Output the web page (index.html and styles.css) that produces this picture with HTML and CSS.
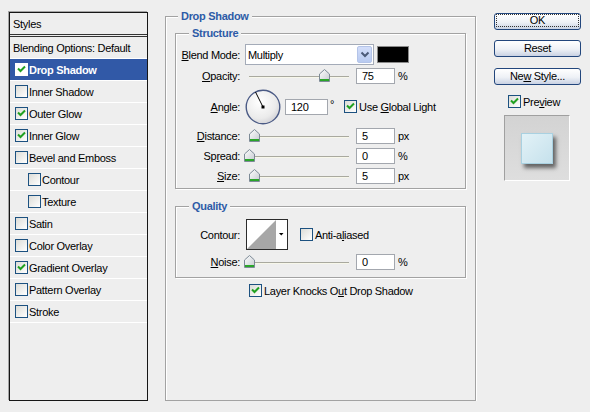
FILE: index.html
```html
<!DOCTYPE html>
<html>
<head>
<title>Layer Style</title>
<link rel="stylesheet" href="styles.css">
</head>
<body>
<svg class="defs" width="0" height="0">
  <defs>
    <linearGradient id="thumb-fill" x1="0" y1="0" x2="1" y2="1">
      <stop offset="0" stop-color="#ffffff"/>
      <stop offset="1" stop-color="#c4c9cf"/>
    </linearGradient>
    <radialGradient id="dial-fill" cx="0.4" cy="0.35" r="0.7">
      <stop offset="0" stop-color="#ffffff"/>
      <stop offset="0.7" stop-color="#ebebeb"/>
      <stop offset="1" stop-color="#cfcfd4"/>
    </radialGradient>
    <symbol id="thumb" viewBox="0 0 11 13">
      <path d="M5.5 0.5 L10.5 5 V12.5 H0.5 V5 Z" fill="url(#thumb-fill)" stroke="#7d8a96"/>
      <rect x="1" y="10" width="9" height="2" fill="#2aa52a"/>
    </symbol>
    <symbol id="tick" viewBox="0 0 11 11">
      <polyline points="2,4.5 4.5,7 9,2.5" fill="none" stroke="#21a121" stroke-width="2"/>
    </symbol>
  </defs>
</svg>

<div class="dialog">

  <div class="styles-list">
    <div class="styles-head">Styles</div>
    <div class="style-row plain">Blending Options: Default</div>
    <div class="style-row selected"><span class="check"><svg width="11" height="11"><use href="#tick"/></svg></span>Drop Shadow</div>
    <div class="style-row"><span class="check"></span>Inner Shadow</div>
    <div class="style-row"><span class="check"><svg width="11" height="11"><use href="#tick"/></svg></span>Outer Glow</div>
    <div class="style-row"><span class="check"><svg width="11" height="11"><use href="#tick"/></svg></span>Inner Glow</div>
    <div class="style-row"><span class="check"></span>Bevel and Emboss</div>
    <div class="style-row indent"><span class="check"></span>Contour</div>
    <div class="style-row indent"><span class="check"></span>Texture</div>
    <div class="style-row"><span class="check"></span>Satin</div>
    <div class="style-row"><span class="check"></span>Color Overlay</div>
    <div class="style-row"><span class="check"><svg width="11" height="11"><use href="#tick"/></svg></span>Gradient Overlay</div>
    <div class="style-row"><span class="check"></span>Pattern Overlay</div>
    <div class="style-row"><span class="check"></span>Stroke</div>
  </div>

  <div class="group group-main">
    <div class="group-title">Drop Shadow</div>

    <div class="group group-inner group-structure">
      <div class="group-title title-inner">Structure</div>

      <div class="row row-blend">
        <span class="label"><u>B</u>lend Mode:</span>
        <div class="select">
          <span class="select-value">Multiply</span>
          <span class="select-btn">
            <svg width="10" height="7" viewBox="0 0 10 7"><polyline points="1.5,1.5 5,5 8.5,1.5" fill="none" stroke="#4b5a78" stroke-width="2"/></svg>
          </span>
        </div>
        <span class="swatch"></span>
      </div>

      <div class="row row-slider gap-3">
        <span class="label"><u>O</u>pacity:</span>
        <div class="slider"><svg class="thumb" style="left:75%" width="11" height="13"><use href="#thumb"/></svg></div>
        <span class="field">75</span>
        <span class="unit">%</span>
      </div>

      <div class="row row-angle gap-4">
        <span class="label"><u>A</u>ngle:</span>
        <svg class="dial" width="36" height="36" viewBox="0 0 36 36">
          <circle cx="18" cy="18" r="16.8" fill="url(#dial-fill)" stroke="#4a5a85" stroke-width="1.4"/>
          <line x1="18" y1="18" x2="10.5" y2="3" stroke="#000" stroke-width="1"/>
          <rect x="16.5" y="16.5" width="3" height="3" fill="#000"/>
        </svg>
        <span class="field field-angle">120</span>
        <span class="degree">°</span>
        <span class="check check-global"><svg width="11" height="11"><use href="#tick"/></svg></span>
        <span class="check-text">Use <u>G</u>lobal Light</span>
      </div>

      <div class="row row-slider gap-3">
        <span class="label"><u>D</u>istance:</span>
        <div class="slider"><svg class="thumb" style="left:5%" width="11" height="13"><use href="#thumb"/></svg></div>
        <span class="field">5</span>
        <span class="unit">px</span>
      </div>

      <div class="row row-slider gap-4">
        <span class="label">Sp<u>r</u>ead:</span>
        <div class="slider"><svg class="thumb" style="left:0%" width="11" height="13"><use href="#thumb"/></svg></div>
        <span class="field">0</span>
        <span class="unit">%</span>
      </div>

      <div class="row row-slider gap-4">
        <span class="label"><u>S</u>ize:</span>
        <div class="slider"><svg class="thumb" style="left:5%" width="11" height="13"><use href="#thumb"/></svg></div>
        <span class="field">5</span>
        <span class="unit">px</span>
      </div>
    </div>

    <div class="group group-inner group-quality">
      <div class="group-title title-inner">Quality</div>

      <div class="row row-contour">
        <span class="label">Contour:</span>
        <svg class="contour" width="42" height="31" viewBox="0 0 42 31">
          <rect x="0.5" y="0.5" width="41" height="30" fill="#fff" stroke="#2b2b2b"/>
          <polygon points="1,30 30,1 30,30" fill="#a7a7a7"/>
          <polygon points="33,14 37.5,14 35.25,16.5" fill="#000"/>
        </svg>
        <span class="check check-aa"></span>
        <span class="check-text">Anti-a<u>l</u>iased</span>
      </div>

      <div class="row row-slider gap-4">
        <span class="label"><u>N</u>oise:</span>
        <div class="slider"><svg class="thumb" style="left:0%" width="11" height="13"><use href="#thumb"/></svg></div>
        <span class="field">0</span>
        <span class="unit">%</span>
      </div>
    </div>

    <div class="row row-knock">
      <span class="check"><svg width="11" height="11"><use href="#tick"/></svg></span>
      <span class="check-text">Layer Knocks O<u>u</u>t Drop Shadow</span>
    </div>
  </div>

  <div class="buttons">
    <div class="btn btn-default"><span>OK</span></div>
    <div class="btn btn-reset">Reset</div>
    <div class="btn btn-new">Ne<u>w</u> Style...</div>
    <div class="row row-preview">
      <span class="check"><svg width="11" height="11"><use href="#tick"/></svg></span>
      <span class="check-text">Pre<u>v</u>iew</span>
    </div>
    <div class="preview">
      <div class="preview-square"></div>
    </div>
  </div>

</div>
</body>
</html>
```

FILE: styles.css
```css
body {
  margin: 0;
  background-color: #eeeeee;
  font-family: "Liberation Sans", Arial, sans-serif;
  font-size: 11px;
  letter-spacing: -0.3px;
  color: #000;
}
.defs {
  position: absolute;
  width: 0;
  height: 0;
}
.dialog {
  display: flex;
  align-items: flex-start;
  padding: 12px 0 0 9px;
}

/* styles list */
.styles-list {
  width: 139px;
  height: 389px;
  box-sizing: border-box;
  border: 1px solid #161616;
  box-shadow: -1px -1px 0 #a5a5a5;
  background-color: #eeeeee;
}
.styles-head {
  height: 21px;
  line-height: 22px;
  padding-left: 3px;
  border-bottom: 3px double #333;
}
.style-row {
  display: flex;
  align-items: center;
  height: 21px;
  padding-left: 5px;
  border-bottom: 1px solid #fff;
  white-space: nowrap;
}
.style-row.plain {
  padding-left: 3px;
}
.style-row.indent {
  padding-left: 18px;
}
.style-row.selected {
  background-color: #3159a7;
  color: #fff;
  font-weight: bold;
}
.check {
  display: inline-flex;
  align-items: center;
  justify-content: center;
  flex: none;
  width: 13px;
  height: 13px;
  box-sizing: border-box;
  border: 1px solid #1c5180;
  background: linear-gradient(135deg, #dcdcd7, #ffffff);
  margin-right: 1px;
}
.selected .check {
  border-color: #fff;
  background: #fff;
}
.check-text {
  margin-left: 1px;
  white-space: nowrap;
}

/* group boxes */
.group {
  border: 1px solid #a2a2a2;
  box-shadow: inset 1px 1px 0 #fff, 1px 1px 0 #fff;
  box-sizing: border-box;
}
.group-title {
  display: table;
  margin: -7px 0 0 12px;
  padding: 0 3px;
  line-height: 13px;
  background-color: #eeeeee;
  color: #2d5ba7;
  font-weight: bold;
}
.title-inner {
  margin-left: 13px;
}
.group-main {
  width: 311px;
  height: 385px;
  margin: 4px 0 0 17px;
}
.group-inner {
  width: 291px;
  margin-left: 9px;
}
.group-structure {
  margin-top: 10px;
  padding-bottom: 4px;
}
.group-quality {
  margin-top: 17px;
  padding-bottom: 7px;
}

/* rows */
.row {
  display: flex;
  align-items: center;
}
.gap-3 {
  margin-top: 3px;
}
.gap-4 {
  margin-top: 4px;
}
.label {
  flex: none;
  width: 64px;
  text-align: right;
  white-space: nowrap;
}
.row-blend {
  height: 21px;
  margin-top: 4px;
}
.select {
  display: flex;
  width: 129px;
  height: 21px;
  box-sizing: border-box;
  margin-left: 5px;
  border: 1px solid #a4abb8;
  background-color: #fff;
}
.select-value {
  flex: 1;
  padding-left: 2px;
  line-height: 20px;
}
.select-btn {
  display: flex;
  align-items: center;
  justify-content: center;
  width: 15px;
  height: 17px;
  margin: 1px;
  border: 1px solid #b4c4e8;
  border-radius: 2px;
  box-sizing: border-box;
  background: linear-gradient(#d3defa, #b8caf0);
}
.swatch {
  width: 32px;
  height: 17px;
  margin-left: 3px;
  box-sizing: border-box;
  border: 1px solid #8a8a8a;
  background-color: #000;
}
.row-slider {
  height: 16px;
}
.slider {
  position: relative;
  flex: none;
  width: 100px;
  height: 16px;
  margin-left: 9px;
}
.slider::before {
  content: "";
  position: absolute;
  left: 0;
  right: 0;
  top: 8px;
  height: 1px;
  background-color: #a9a99f;
  box-shadow: 0 1px 0 #f7f7ea;
}
.thumb {
  position: absolute;
  top: 1px;
  margin-left: -5px;
}
.field {
  flex: none;
  width: 39px;
  height: 16px;
  box-sizing: border-box;
  margin-left: 7px;
  padding-left: 5px;
  border: 1px solid #a3a7ae;
  background-color: #fff;
  line-height: 15px;
}
.unit {
  margin-left: 3px;
}
.row-angle {
  height: 37px;
}
.dial {
  flex: none;
  margin-left: 5px;
}
.field-angle {
  width: 43px;
  margin-left: 4px;
}
.degree {
  margin-left: 2px;
  align-self: flex-start;
  margin-top: 10px;
}
.check-global {
  margin-left: 10px;
}
.row-contour {
  height: 31px;
  margin-top: 6px;
}
.contour {
  flex: none;
  margin-left: 6px;
}
.check-aa {
  margin-left: 12px;
}
.row-knock {
  height: 13px;
  margin: 6px 0 0 83px;
}

/* buttons */
.buttons {
  display: flex;
  flex-direction: column;
  width: 87px;
  margin: 1px 0 0 18px;
}
.btn {
  height: 17px;
  box-sizing: border-box;
  border: 1px solid #22467c;
  border-radius: 3px;
  background: linear-gradient(#ffffff, #eef1f6 55%, #c9d2e3);
  text-align: center;
  line-height: 15px;
}
.btn-default span {
  display: block;
  margin: 1px 2px;
  line-height: 11px;
  outline: 1px dotted #333;
}
.btn-reset {
  margin-top: 10px;
}
.btn-new {
  margin-top: 11px;
}
.row-preview {
  height: 13px;
  margin: 10px 0 0 14px;
}
.preview {
  width: 66px;
  height: 66px;
  box-sizing: border-box;
  margin: 7px 0 0 10px;
  padding: 17px 0 0 16px;
  border: 1px solid;
  border-color: #a0a0a0 #fff #fff #a0a0a0;
  background: linear-gradient(#d3d3d3, #dedede);
}
.preview-square {
  width: 32px;
  height: 31px;
  box-sizing: border-box;
  border: 1px solid #a9d1e1;
  background: linear-gradient(135deg, #e3f2f7, #c5e1ec);
  box-shadow: 3px 4px 4px rgba(0, 0, 0, 0.55);
}
```
